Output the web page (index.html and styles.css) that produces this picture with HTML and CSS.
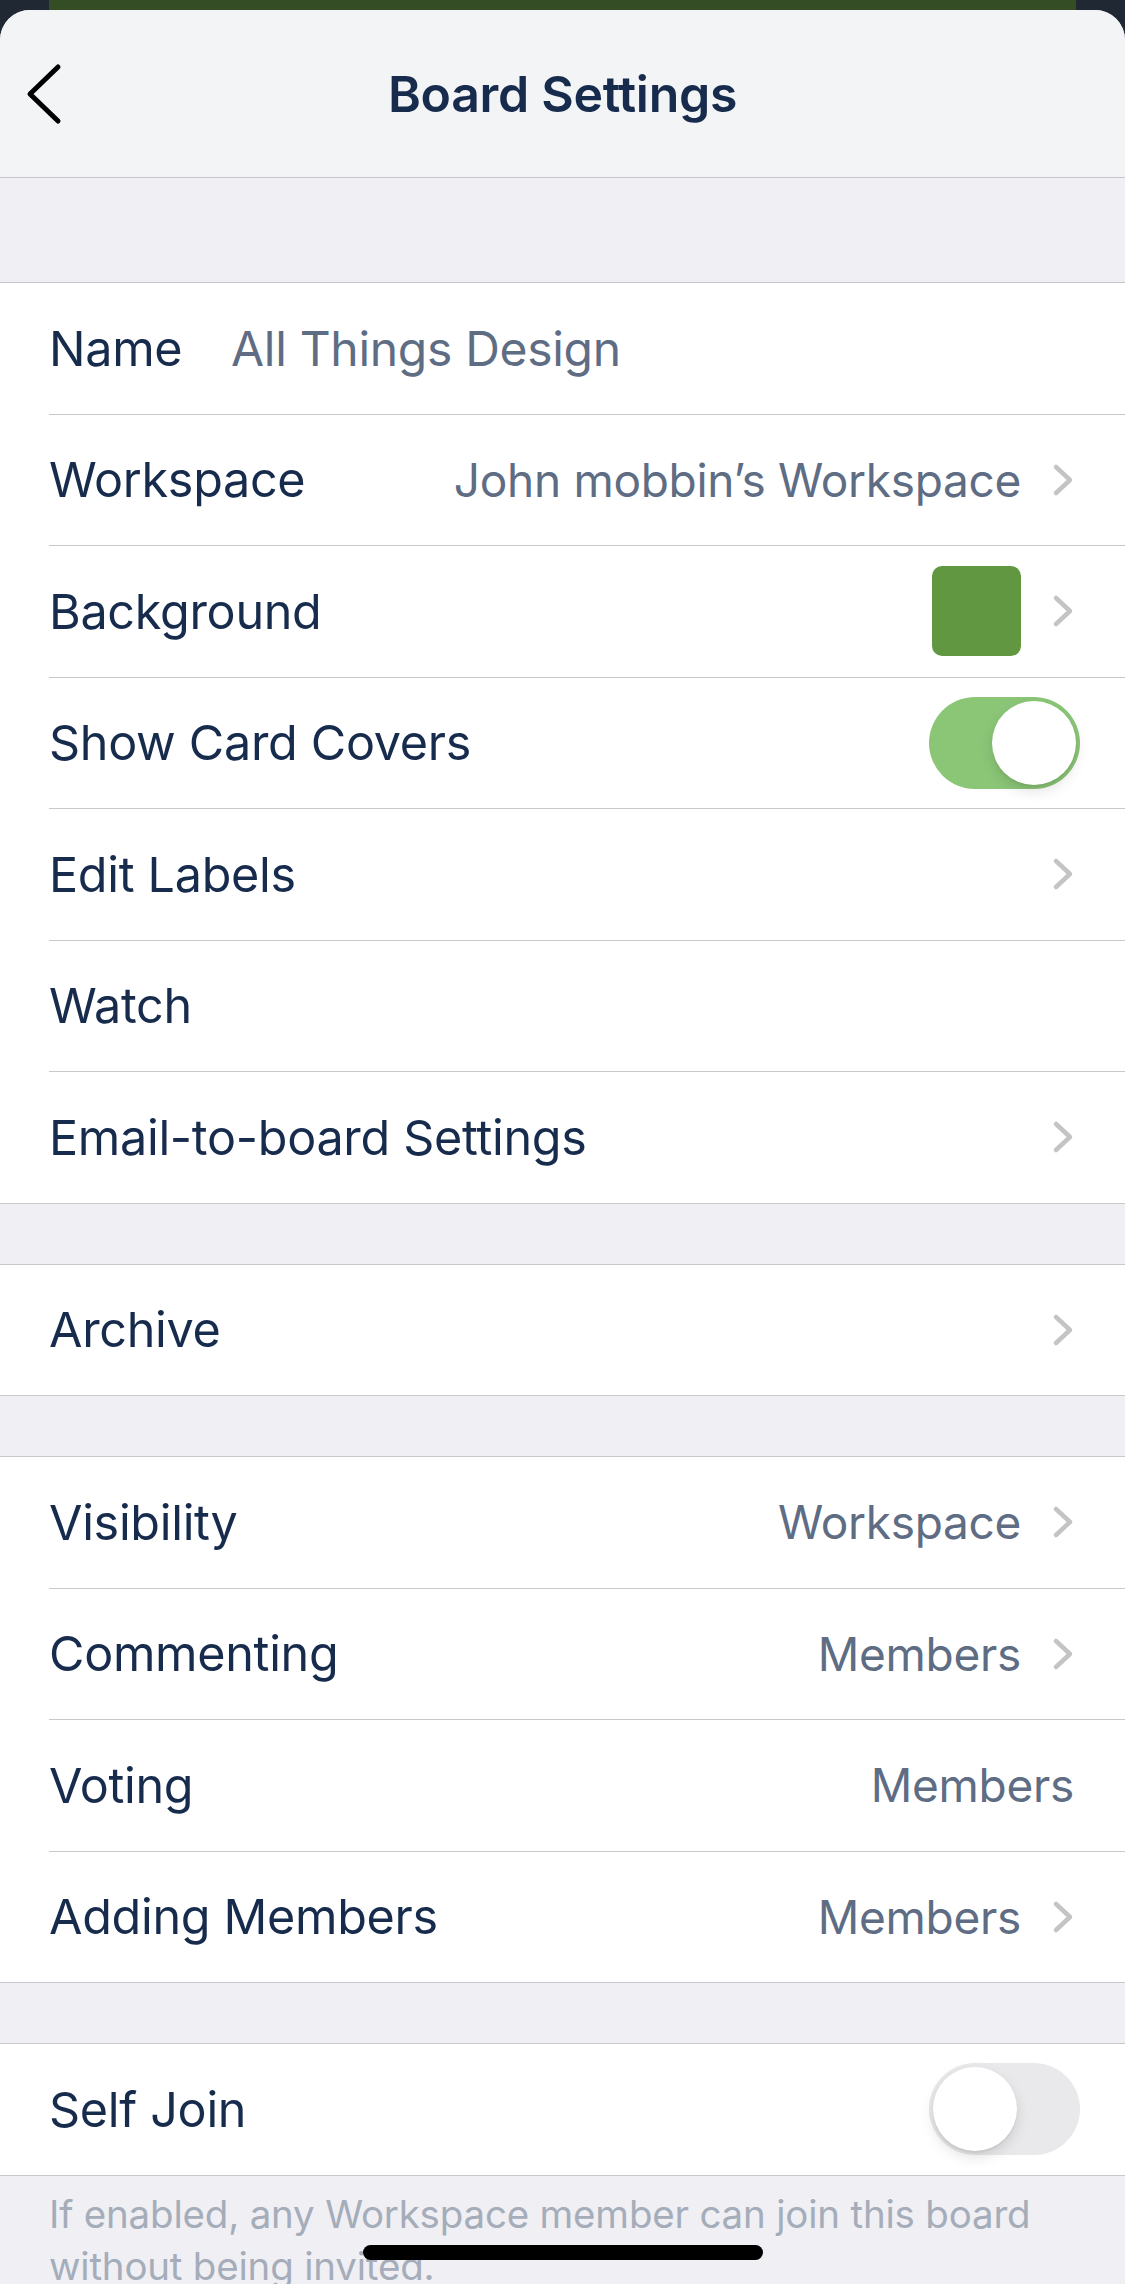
FILE: index.html
```html
<!DOCTYPE html>
<html lang="en">
<head>
  <meta charset="UTF-8">
  <meta name="viewport" content="width=device-width, initial-scale=1">
  <title>Board Settings</title>
  <link rel="stylesheet" href="styles.css">
</head>
<body>

  <div class="peek">
    <div class="peek-board"></div>
  </div>

  <div class="sheet">
    <header class="nav">
      <button class="back" aria-label="Back">
        <svg width="40" height="64" viewBox="0 0 40 64">
          <polyline points="33,5 5,32 33,59" fill="none" stroke="#000" stroke-width="5" stroke-linecap="round" stroke-linejoin="round"/>
        </svg>
      </button>
      <h1>Board Settings</h1>
    </header>

    <div class="gap gap-top"></div>

    <section class="group">
      <div class="row">
        <div class="row-inner">
          <span class="label label-fixed">Name</span>
          <span class="value value-field">All Things Design</span>
        </div>
      </div>
      <div class="row">
        <div class="row-inner">
          <span class="label">Workspace</span>
          <span class="value">John mobbin’s Workspace</span>
          <svg class="chevron" width="22" height="34" viewBox="0 0 22 34"><polyline points="4,4 18,17 4,30" /></svg>
        </div>
      </div>
      <div class="row">
        <div class="row-inner">
          <span class="label">Background</span>
          <span class="swatch"></span>
          <svg class="chevron" width="22" height="34" viewBox="0 0 22 34"><polyline points="4,4 18,17 4,30" /></svg>
        </div>
      </div>
      <div class="row">
        <div class="row-inner">
          <span class="label">Show Card Covers</span>
          <span class="toggle on"><span class="knob"></span></span>
        </div>
      </div>
      <div class="row">
        <div class="row-inner">
          <span class="label">Edit Labels</span>
          <svg class="chevron" width="22" height="34" viewBox="0 0 22 34"><polyline points="4,4 18,17 4,30" /></svg>
        </div>
      </div>
      <div class="row">
        <div class="row-inner">
          <span class="label">Watch</span>
        </div>
      </div>
      <div class="row">
        <div class="row-inner">
          <span class="label">Email-to-board Settings</span>
          <svg class="chevron" width="22" height="34" viewBox="0 0 22 34"><polyline points="4,4 18,17 4,30" /></svg>
        </div>
      </div>
    </section>

    <div class="gap"></div>

    <section class="group">
      <div class="row">
        <div class="row-inner">
          <span class="label">Archive</span>
          <svg class="chevron" width="22" height="34" viewBox="0 0 22 34"><polyline points="4,4 18,17 4,30" /></svg>
        </div>
      </div>
    </section>

    <div class="gap"></div>

    <section class="group">
      <div class="row">
        <div class="row-inner">
          <span class="label">Visibility</span>
          <span class="value">Workspace</span>
          <svg class="chevron" width="22" height="34" viewBox="0 0 22 34"><polyline points="4,4 18,17 4,30" /></svg>
        </div>
      </div>
      <div class="row">
        <div class="row-inner">
          <span class="label">Commenting</span>
          <span class="value">Members</span>
          <svg class="chevron" width="22" height="34" viewBox="0 0 22 34"><polyline points="4,4 18,17 4,30" /></svg>
        </div>
      </div>
      <div class="row">
        <div class="row-inner">
          <span class="label">Voting</span>
          <span class="value">Members</span>
        </div>
      </div>
      <div class="row">
        <div class="row-inner">
          <span class="label">Adding Members</span>
          <span class="value">Members</span>
          <svg class="chevron" width="22" height="34" viewBox="0 0 22 34"><polyline points="4,4 18,17 4,30" /></svg>
        </div>
      </div>
    </section>

    <div class="gap"></div>

    <section class="group">
      <div class="row">
        <div class="row-inner">
          <span class="label">Self Join</span>
          <span class="toggle"><span class="knob"></span></span>
        </div>
      </div>
    </section>

    <p class="footnote">If enabled, any Workspace member can join this board without being invited.</p>
  </div>

  <div class="home-indicator"></div>

</body>
</html>
```

FILE: styles.css
```css
body {
  margin: 0;
  width: 1125px;
  height: 2284px;
  overflow: hidden;
  background-color: #1f2833;
  font-family: "Inter", "Liberation Sans", sans-serif;
  color: #172b4d;
  position: relative;
}
.peek {
  height: 10px;
  padding: 0 49px;
}
.peek-board {
  height: 100%;
  background-color: #344d25;
}
.sheet {
  background-color: #f0f0f4;
  border-radius: 30px 30px 0 0;
  overflow: hidden;
  height: 2274px;
}
.nav {
  height: 167px;
  background-color: #f3f4f6;
  border-bottom: 1px solid #c6c6c9;
  display: flex;
  align-items: center;
  justify-content: center;
  position: relative;
}
.nav h1 {
  margin: 0;
  font-size: 50px;
  font-weight: 600;
  color: #172b4d;
  letter-spacing: -0.3px;
}
.back {
  position: absolute;
  left: 25px;
  top: 52px;
  border: none;
  background: none;
  padding: 0;
  line-height: 0;
}
.gap {
  height: 60px;
}
.gap-top {
  height: 104px;
}
.group {
  background-color: #fff;
  border-top: 1px solid #c8c8cc;
  border-bottom: 1px solid #c8c8cc;
}
.row {
  padding-left: 49px;
}
.row-inner {
  height: 131.5px;
  display: flex;
  align-items: center;
  padding-right: 51px;
  border-bottom: 1px solid #c8c8cc;
  box-sizing: border-box;
}
.row:last-child .row-inner {
  border-bottom: none;
  height: 130.5px;
}
.label {
  font-size: 48.5px;
  letter-spacing: -0.3px;
  flex: 1;
}
.label-fixed {
  flex: none;
  width: 182px;
}
.value {
  font-size: 46px;
  letter-spacing: -0.3px;
  color: #5e6c84;
}
.value-field {
  font-size: 48px;
}
.chevron {
  margin-left: 31px;
  fill: none;
  stroke: #c4c4c7;
  stroke-width: 4.5;
  stroke-linecap: round;
  stroke-linejoin: round;
}
.swatch {
  width: 89px;
  height: 90px;
  border-radius: 10px;
  background-color: #629742;
}
.toggle {
  width: 151px;
  height: 92px;
  border-radius: 46px;
  background-color: #e9e9eb;
  margin-right: -6px;
  display: flex;
  align-items: center;
  padding: 0 4px;
  box-sizing: border-box;
}
.toggle .knob {
  width: 84px;
  height: 84px;
  border-radius: 50%;
  background-color: #fff;
  box-shadow: 0 6px 14px rgba(0, 0, 0, 0.12), 0 2px 2px rgba(0, 0, 0, 0.06);
}
.toggle.on {
  background-color: #8bc677;
  justify-content: flex-end;
}
.footnote {
  margin: 0;
  padding: 12px 49px 0;
  font-size: 38.5px;
  line-height: 52px;
  color: #a5adba;
  letter-spacing: -0.2px;
}
.home-indicator {
  position: absolute;
  left: 363px;
  top: 2245px;
  width: 400px;
  height: 15px;
  border-radius: 8px;
  background-color: #000;
}
```
